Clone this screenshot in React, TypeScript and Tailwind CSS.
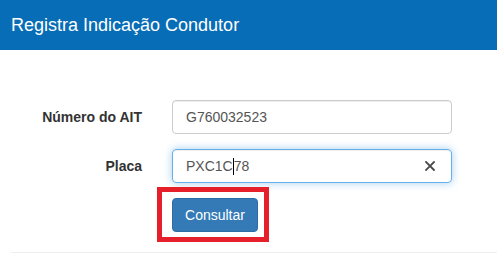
import React from "react";

const Field = ({ label, children }: { label: string; children: React.ReactNode }) => {
  return (
    <>
      <label className="flex items-center justify-end text-[14px] font-bold text-[#333]">
        {label}
      </label>
      {children}
    </>
  );
};

const App = () => {
  return (
    <div className="w-[497px] h-[258px] bg-white overflow-hidden font-['Liberation_Sans',Arial,sans-serif]">
      <header className="h-[50px] bg-[#076db6] flex items-center px-[11px]">
        <h1 className="text-[18px] text-white font-normal">Registra Indicação Condutor</h1>
      </header>

      <section className="pl-[11px] pt-[50px]">
        <div className="grid grid-cols-[131px_280px] gap-x-[30px] gap-y-[15px]">
          <Field label="Número do AIT">
            <div className="h-[34px] flex items-center px-[13px] border border-[#ccc] rounded-[4px] shadow-[inset_0_1px_1px_rgba(0,0,0,0.075)] text-[14px] text-[#555]">
              G760032523
            </div>
          </Field>

          <Field label="Placa">
            <div className="h-[34px] flex items-center px-[13px] border border-[#66afe9] rounded-[4px] shadow-[inset_0_1px_1px_rgba(0,0,0,0.075),0_0_8px_rgba(102,175,233,0.6)] text-[14px] text-[#555]">
              <span>PXC1C</span>
              <span className="w-px h-[17px] bg-black" />
              <span>78</span>
              <svg
                className="ml-auto mr-[3px]"
                width="10"
                height="10"
                viewBox="0 0 10 10"
              >
                <path
                  d="M1 1 L9 9 M9 1 L1 9"
                  stroke="#4a4a4a"
                  strokeWidth="1.8"
                  strokeLinecap="square"
                />
              </svg>
            </div>
          </Field>

          <div />
          <div className="relative w-fit">
            <button className="h-[34px] w-[86px] bg-[#337ab7] border border-[#2e6da4] rounded-[4px] text-white text-[14px]">
              Consultar
            </button>
            <div className="absolute left-[-15px] top-[-11px] w-[112px] h-[55px] border-[5px] border-[#e5202a] pointer-events-none" />
          </div>
        </div>

        <div className="mt-[20px] border-t border-[#eee]" />
      </section>
    </div>
  );
};

export default App;
